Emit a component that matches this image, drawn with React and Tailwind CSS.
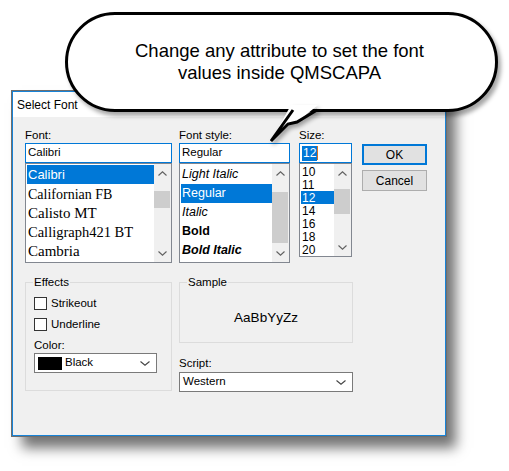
import React from 'react';

const ui = "font-['Liberation_Sans',Arial,sans-serif]";

const Chevron = ({ dir = 'up', color = '#606060', w = 9 }) => (
  <svg width={w} height="5" viewBox={`0 0 ${w} 5`}>
    <polyline
      points={dir === 'up' ? `0.5,4.5 ${w / 2},0.8 ${w - 0.5},4.5` : `0.5,0.5 ${w / 2},4.2 ${w - 0.5},0.5`}
      fill="none"
      stroke={color}
      strokeWidth="1.1"
    />
  </svg>
);

const ScrollBar = ({ thumb }) => (
  <div className="w-[17px] flex flex-col bg-[#f0f0f0]">
    <div className="h-[17px] flex items-center justify-center pt-[2px]">
      <Chevron dir="up" />
    </div>
    <div className="flex-1">
      <div className={`mr-[1px] bg-[#cdcdcd] ${thumb}`} />
    </div>
    <div className="h-[17px] flex items-center justify-center">
      <Chevron dir="down" />
    </div>
  </div>
);

const Label = ({ children }) => (
  <div className={`h-[16px] leading-[16px] text-[11.5px] text-black ${ui}`}>{children}</div>
);

const Checkbox = ({ label }) => (
  <div className="flex items-center h-[13px] ml-[1px]">
    <div className="w-[13px] h-[13px] border border-[#333] bg-white" />
    <span className={`ml-[4px] text-[11.5px] text-black ${ui}`}>{label}</span>
  </div>
);

const Dropdown = ({ width, children }) => (
  <div className={`${width} h-[20px] border border-[#7a7a7a] bg-white flex items-center pr-[6px]`}>
    <div className="flex-1 flex items-center">{children}</div>
    <Chevron dir="down" color="#444" w={10} />
  </div>
);

const fonts = [
  { name: 'Calibri', cls: "font-['Liberation_Sans',sans-serif] text-[13px]", sel: true },
  { name: 'Californian FB', cls: "font-['Liberation_Serif',serif] text-[14px]" },
  { name: 'Calisto MT', cls: "font-['Liberation_Serif',serif] text-[15px]" },
  { name: 'Calligraph421 BT', cls: "font-['Liberation_Serif',serif] text-[14.5px]" },
  { name: 'Cambria', cls: "font-['Liberation_Serif',serif] text-[15px]" },
];

const styles = [
  { name: 'Light Italic', cls: 'italic text-[#222]' },
  { name: 'Regular', cls: '', sel: true },
  { name: 'Italic', cls: 'italic' },
  { name: 'Bold', cls: 'font-bold' },
  { name: 'Bold Italic', cls: 'font-bold italic' },
];

const sizes = ['10', '11', '12', '14', '16', '18', '20'];

export default function App() {
  return (
    <div className="relative w-[509px] h-[471px] bg-white overflow-hidden">
      {/* Dialog */}
      <div className="ml-[12px] mt-[91px] w-[434px] h-[345px] border border-[#1883d7] ring-1 ring-[#6e6e6e] shadow-[10px_12px_12px_rgba(0,0,0,0.55)] flex flex-col">
        <div className={`h-[25px] bg-white pl-[4px] flex items-center text-[12px] text-black ${ui}`}>Select Font</div>

        <div className="flex-1 bg-[#f0f0f0] pl-[12px] pt-[10px]">
          {/* Top row */}
          <div className="flex items-start">
            {/* Font */}
            <div className="w-[147px]">
              <Label>Font:</Label>
              <div className={`h-[20px] border border-[#0078d7] bg-white flex items-center pl-[2px] text-[11.5px] text-black ${ui}`}>Calibri</div>
              <div className="h-[100px] border border-[#828790] bg-white flex">
                <div className="flex-1 pl-[1px] pt-[1px]">
                  {fonts.map((f) => (
                    <div
                      key={f.name}
                      className={`h-[19px] flex items-center pl-[1px] leading-none ${f.cls} ${f.sel ? 'bg-[#0078d7] text-white h-[18px] mb-[1px]' : 'text-black'}`}
                    >
                      {f.name}
                    </div>
                  ))}
                </div>
                <ScrollBar thumb="mt-[10px] h-[17px]" />
              </div>
            </div>

            {/* Font style */}
            <div className="w-[111px] ml-[7px]">
              <Label>Font style:</Label>
              <div className={`h-[20px] border border-[#0078d7] bg-white flex items-center pl-[2px] text-[11.5px] text-black ${ui}`}>Regular</div>
              <div className="h-[100px] border border-[#828790] bg-white flex">
                <div className="flex-1 pl-[1px] pt-[1px]">
                  {styles.map((s) => (
                    <div
                      key={s.name}
                      className={`h-[19px] flex items-center pl-[1px] text-[12.5px] leading-none ${ui} ${s.cls} ${s.sel ? 'bg-[#0078d7] text-white' : 'text-black'}`}
                    >
                      {s.name}
                    </div>
                  ))}
                </div>
                <ScrollBar thumb="mt-[11px] h-[51px]" />
              </div>
            </div>

            {/* Size */}
            <div className="w-[53px] ml-[9px]">
              <Label>Size:</Label>
              <div className={`h-[20px] border border-[#0078d7] bg-white flex items-center pl-[2px] text-[12px] ${ui}`}>
                <span className="bg-[#0078d7] text-white leading-[15px] px-[1px]">12</span>
                <span className="w-[1px] h-[14px] bg-[#d9741e]" />
              </div>
              <div className="h-[94px] border border-[#828790] bg-white flex">
                <div className="flex-1 pl-[1px] pt-[1px]">
                  {sizes.map((s) => (
                    <div
                      key={s}
                      className={`h-[13px] flex items-center pl-[1px] text-[12px] leading-none ${ui} ${s === '12' ? 'bg-[#0078d7] text-white' : 'text-black'}`}
                    >
                      {s}
                    </div>
                  ))}
                </div>
                <ScrollBar thumb="mt-[8px] h-[25px]" />
              </div>
            </div>

            {/* Buttons */}
            <div className="w-[65px] ml-[10px] mt-[17px] flex flex-col gap-[5px]">
              <button className={`h-[21px] border-2 border-[#0078d7] bg-[#e1e1e1] text-[12px] text-black ${ui}`}>OK</button>
              <button className={`h-[21px] border border-[#adadad] bg-[#e1e1e1] text-[12px] text-black ${ui}`}>Cancel</button>
            </div>
          </div>

          {/* Bottom row */}
          <div className="flex items-start mt-[11px]">
            <fieldset className="w-[147px] border border-[#dcdcdc] pl-[7px] pb-[17px]">
              <legend className={`px-[1px] h-[16px] leading-[16px] text-[11.5px] text-black ${ui}`}>Effects</legend>
              <div className="mt-[7px] flex flex-col gap-[8px]">
                <Checkbox label="Strikeout" />
                <Checkbox label="Underline" />
              </div>
              <div className="mt-[6px] ml-[1px]">
                <Label>Color:</Label>
                <Dropdown width="w-[123px]">
                  <div className="ml-[3px] w-[24px] h-[13px] bg-black" />
                  <span className={`ml-[3px] text-[11.5px] text-black ${ui}`}>Black</span>
                </Dropdown>
              </div>
            </fieldset>

            <div className="w-[174px] ml-[7px]">
              <fieldset className="border border-[#dcdcdc] pl-[7px]">
                <legend className={`px-[1px] h-[16px] leading-[16px] text-[11.5px] text-black ${ui}`}>Sample</legend>
                <div className={`h-[52px] pt-[4px] pr-[7px] flex items-center justify-center text-[13.5px] text-black ${ui}`}>AaBbYyZz</div>
              </fieldset>
              <div className="mt-[12px]">
                <Label>Script:</Label>
                <div className="mt-[1px]">
                  <Dropdown width="w-[174px]">
                    <span className={`ml-[3px] text-[11.5px] text-black ${ui}`}>Western</span>
                  </Dropdown>
                </div>
              </div>
            </div>
          </div>
        </div>
      </div>

      {/* Callout bubble */}
      <div className="absolute left-[65px] top-[12px] w-[433px] h-[100px] rounded-full border-[3px] border-black bg-white shadow-[3px_4px_4px_rgba(0,0,0,0.35)] flex items-center justify-center pr-[4px]">
        <p className="text-center text-[18.5px] leading-[22px] text-black font-['Liberation_Sans',Arial,sans-serif]">
          Change any attribute to set the font
          <br />
          values inside QMSCAPA
        </p>
      </div>
      <svg className="absolute left-0 top-0 pointer-events-none drop-shadow-[2px_3px_2px_rgba(0,0,0,0.35)]" width="509" height="471" viewBox="0 0 509 471">
        <polygon points="291,105 318,105 297,122 288,124 271,141" fill="white" />
        <polyline points="293,110 271,141 288,124 297,122 317,110" fill="none" stroke="black" strokeWidth="3" strokeLinejoin="miter" />
      </svg>
    </div>
  );
}
